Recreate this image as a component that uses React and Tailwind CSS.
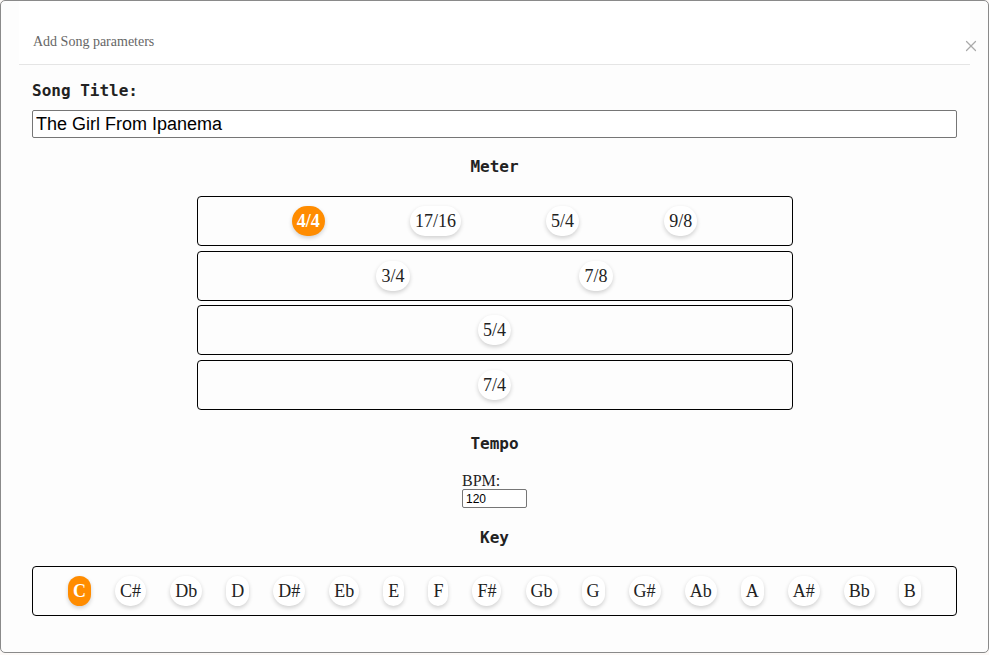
import { X } from "lucide-react";

const meterRows = [["4/4", "17/16", "5/4", "9/8"], ["3/4", "7/8"], ["5/4"], ["7/4"]];
const rowGaps = ["", "mt-[5px]", "mt-[4px]", "mt-[5px]"];
const keys = ["C", "C#", "Db", "D", "D#", "Eb", "E", "F", "F#", "Gb", "G", "G#", "Ab", "A", "A#", "Bb", "B"];

function Pill({ label, active }) {
  return (
    <button
      className={
        "h-[30px] px-[5px] rounded-full flex items-center text-[18px] leading-none font-['Liberation_Serif',serif] shadow-[0_2px_4px_rgba(0,0,0,0.18)] " +
        (active ? "bg-[#ff8c00] text-white font-bold" : "bg-white text-[#222]")
      }
    >
      {label}
    </button>
  );
}

function Heading({ children, className }) {
  return (
    <h2 className={"text-center text-[16px] leading-[20px] font-bold text-[#222] font-['DejaVu_Sans_Mono',monospace] " + className}>
      {children}
    </h2>
  );
}

export default function App() {
  return (
    <div className="w-[989px] h-[655px] bg-[#fcf9f7]">
      <div className="relative w-[989px] h-[653px] border border-[#8a8a8a] rounded-[5px] bg-[#fdfdfd]">
        {/* header */}
        <div className="mx-[18px] h-[64px] pt-[32px] pl-[14px] border-b border-[#e5e5e5] bg-white">
          <p className="text-[14px] leading-[18px] text-[#666] font-['Liberation_Serif',serif]">Add Song parameters</p>
        </div>
        <button className="absolute right-[8px] top-[36px] text-[#aaa]">
          <X className="w-[18px] h-[18px]" strokeWidth={1.6} />
        </button>

        <div className="px-[31px]">
          <Heading className="!text-left mt-[16px]">Song Title:</Heading>
          <input
            defaultValue="The Girl From Ipanema"
            className="mt-[9px] w-full h-[28px] border border-[#767676] rounded-[2px] pl-[3px] text-[18px] text-black bg-white font-['Liberation_Sans',sans-serif] outline-none"
          />

          <Heading className="mt-[19px]">Meter</Heading>
          <div className="mt-[19px] w-[596px] mx-auto flex flex-col">
            {meterRows.map((row, i) => (
              <div key={i} className={"h-[50px] border border-black rounded-[4px] px-[9px] flex items-center justify-evenly " + rowGaps[i]}>
                {row.map((m, j) => (
                  <Pill key={j} label={m} active={i === 0 && j === 0} />
                ))}
              </div>
            ))}
          </div>

          <Heading className="mt-[24px]">Tempo</Heading>
          <div className="mt-[18px] w-fit mx-auto font-['Liberation_Serif',serif]">
            <p className="text-[16px] leading-[17px] text-[#222]">BPM:</p>
            <input
              defaultValue="120"
              className="block w-[65px] h-[19px] border border-[#767676] rounded-[2px] pl-[3px] text-[12px] bg-white text-black font-['Liberation_Sans',sans-serif] outline-none"
            />
          </div>

          <Heading className="mt-[20px]">Key</Heading>
          <div className="mt-[18px] h-[50px] border border-black rounded-[4px] px-[11px] flex items-center justify-evenly">
            {keys.map((k, i) => (
              <Pill key={k} label={k} active={i === 0} />
            ))}
          </div>
        </div>
      </div>
    </div>
  );
}
